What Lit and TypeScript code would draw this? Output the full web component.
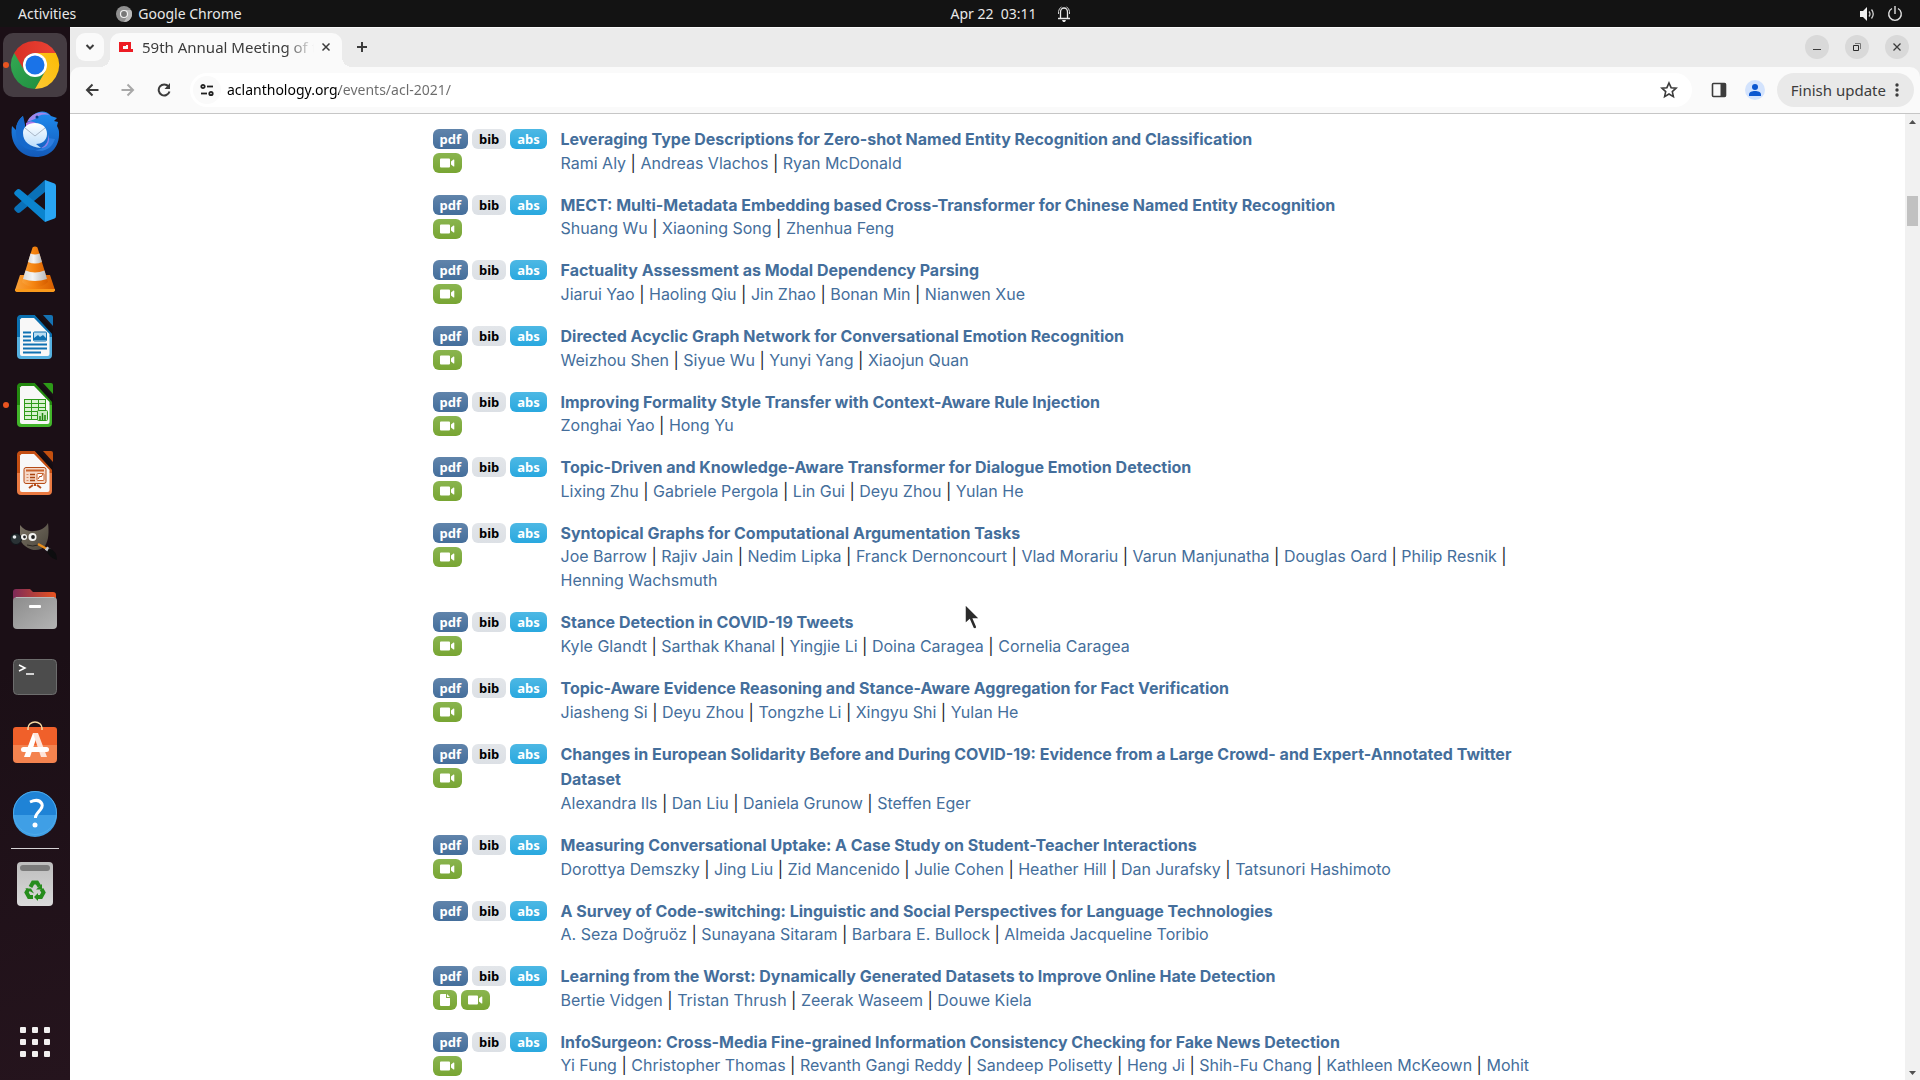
import { LitElement, html, svg, css, nothing } from "lit";
import { customElement, property } from "lit/decorators.js";

interface Paper {
  title: string;
  authors: string[];
  extras?: ("video" | "file")[];
}

const PAPERS: Paper[] = [
  { title: "Leveraging Type Descriptions for Zero-shot Named Entity Recognition and Classification", authors: ["Rami Aly", "Andreas Vlachos", "Ryan McDonald"], extras: ["video"] },
  { title: "MECT: Multi-Metadata Embedding based Cross-Transformer for Chinese Named Entity Recognition", authors: ["Shuang Wu", "Xiaoning Song", "Zhenhua Feng"], extras: ["video"] },
  { title: "Factuality Assessment as Modal Dependency Parsing", authors: ["Jiarui Yao", "Haoling Qiu", "Jin Zhao", "Bonan Min", "Nianwen Xue"], extras: ["video"] },
  { title: "Directed Acyclic Graph Network for Conversational Emotion Recognition", authors: ["Weizhou Shen", "Siyue Wu", "Yunyi Yang", "Xiaojun Quan"], extras: ["video"] },
  { title: "Improving Formality Style Transfer with Context-Aware Rule Injection", authors: ["Zonghai Yao", "Hong Yu"], extras: ["video"] },
  { title: "Topic-Driven and Knowledge-Aware Transformer for Dialogue Emotion Detection", authors: ["Lixing Zhu", "Gabriele Pergola", "Lin Gui", "Deyu Zhou", "Yulan He"], extras: ["video"] },
  { title: "Syntopical Graphs for Computational Argumentation Tasks", authors: ["Joe Barrow", "Rajiv Jain", "Nedim Lipka", "Franck Dernoncourt", "Vlad Morariu", "Varun Manjunatha", "Douglas Oard", "Philip Resnik", "Henning Wachsmuth"], extras: ["video"] },
  { title: "Stance Detection in COVID-19 Tweets", authors: ["Kyle Glandt", "Sarthak Khanal", "Yingjie Li", "Doina Caragea", "Cornelia Caragea"], extras: ["video"] },
  { title: "Topic-Aware Evidence Reasoning and Stance-Aware Aggregation for Fact Verification", authors: ["Jiasheng Si", "Deyu Zhou", "Tongzhe Li", "Xingyu Shi", "Yulan He"], extras: ["video"] },
  { title: "Changes in European Solidarity Before and During COVID-19: Evidence from a Large Crowd- and Expert-Annotated Twitter Dataset", authors: ["Alexandra Ils", "Dan Liu", "Daniela Grunow", "Steffen Eger"], extras: ["video"] },
  { title: "Measuring Conversational Uptake: A Case Study on Student-Teacher Interactions", authors: ["Dorottya Demszky", "Jing Liu", "Zid Mancenido", "Julie Cohen", "Heather Hill", "Dan Jurafsky", "Tatsunori Hashimoto"], extras: ["video"] },
  { title: "A Survey of Code-switching: Linguistic and Social Perspectives for Language Technologies", authors: ["A. Seza Doğruöz", "Sunayana Sitaram", "Barbara E. Bullock", "Almeida Jacqueline Toribio"] },
  { title: "Learning from the Worst: Dynamically Generated Datasets to Improve Online Hate Detection", authors: ["Bertie Vidgen", "Tristan Thrush", "Zeerak Waseem", "Douwe Kiela"], extras: ["file", "video"] },
  { title: "InfoSurgeon: Cross-Media Fine-grained Information Consistency Checking for Fake News Detection", authors: ["Yi Fung", "Christopher Thomas", "Revanth Gangi Reddy", "Sandeep Polisetty", "Heng Ji", "Shih-Fu Chang", "Kathleen McKeown", "Mohit"], extras: ["video"] },
];

/* LibreOffice document shape shared by Writer, Calc and Impress. */
const sheet = (id: string, top: string, bottom: string, edge: string, inner: unknown) => svg`
  <defs>
    <linearGradient id=${id} x1="0" y1="0" x2="0" y2="1">
      <stop offset=".5" stop-color=${top}/><stop offset=".5" stop-color=${bottom}/>
    </linearGradient>
  </defs>
  <path d="M9 2H24L41 20V42a4 4 0 0 1-4 4H10a4 4 0 0 1-4-4V6a4 4 0 0 1 3-4z" fill="url(#${id})"/>
  <path d="M10.500 5H23L38.500 21V41a2 2 0 0 1-2 2H11a2 2 0 0 1-2-2V6.500z" fill="#f8f8f8"/>
  <path d="M32 2h8a2 2 0 0 1 2 2v9z" fill=${edge}/>
  <path d="M24 2h4L42 16v6z" fill="#140d12"/>
  ${inner}`;

const DOCK: { name: string; running?: boolean; active?: boolean; art: unknown }[] = [
  {
    name: "Google Chrome", running: true, active: true,
    art: svg`
      <defs>
        <linearGradient id="cr" x1="0" y1="0" x2="1" y2="0"><stop stop-color="#d93025"/><stop offset="1" stop-color="#ea4335"/></linearGradient>
        <linearGradient id="cy" x1="0" y1="1" x2="1" y2="0"><stop stop-color="#fcc934"/><stop offset="1" stop-color="#fbbc04"/></linearGradient>
        <linearGradient id="cg" x1="0" y1="0" x2="1" y2="1"><stop stop-color="#34a853"/><stop offset="1" stop-color="#1e8e3e"/></linearGradient>
      </defs>
      <path d="M24 24L3.200 12A24 24 0 0 0 24 48L34.400 30z" fill="url(#cg)"/>
      <path d="M24 24L34.400 30 24 48A24 24 0 0 0 44.800 12H24z" fill="url(#cy)"/>
      <path d="M3.200 12A24 24 0 0 1 44.800 12H24A12 12 0 0 0 13.600 30z" fill="url(#cr)"/>
      <circle cx="24" cy="24" r="12" fill="#fff"/><circle cx="24" cy="24" r="9.500" fill="#1a73e8"/>`,
  },
  {
    name: "Thunderbird Mail",
    art: svg`
      <defs>
        <linearGradient id="tb" x1="0" y1="0" x2="0" y2="1"><stop stop-color="#1f8cf0"/><stop offset="1" stop-color="#1359b8"/></linearGradient>
        <linearGradient id="te" x1="0" y1="0" x2="0" y2="1"><stop stop-color="#fff"/><stop offset="1" stop-color="#b9dcfb"/></linearGradient>
      </defs>
      <path d="M1 17c-3 18 9 31 24 31 14 0 24-10 23-25 0-2-1-4-2-6l1-4-4-1 3-3-6-2C34-1 22 2 17 13c-2 3-3 7-3 11L12 7C7 11 5 16 5 21z" fill="url(#tb)"/>
      <path d="M5 21C5 15 8 10 12 7c1 5 3 9 2 15-1 10 4 17 13 19C12 43 4 32 5 21z" fill="#1669cc"/>
      <path d="M16 13C20 4 31 0 40 7c-6-3-13-1-16 3z" fill="#9f86ec"/>
      <path d="M15 14c4-2 7-2 10 0-5 1-8 3-10 8z" fill="#a978e6"/>
      <path d="M44 30c-3 9-11 14-20 11 8 0 12-5 13-12z" fill="#2c7de0"/>
      <path d="M30 39c6-3 8-8 7-14 3 8-1 14-7 14z" fill="#8d80e8"/>
      <path d="M24 14c8 0 12 5 12 11 0 7-6 10-11 10l5 4C19 38 12 33 12 24c0-6 5-10 12-10z" fill="url(#te)"/>
      <path d="M14 19l10 8 10-8" fill="none" stroke="#a9b6c6"/>
      <circle cx="26" cy="8" r="1.500" fill="#0b3f86"/>`,
  },
  {
    name: "Visual Studio Code",
    art: svg`
      <path d="M34 3v12L9 35.500Q7 36.500 5.500 35L3.500 33Q2.500 31.500 4 30z" fill="#0a71b8"/>
      <path d="M34 45V33L9 12.500Q7 11.500 5.500 13L3.500 15Q2.500 16.500 4 18z" fill="#0b84cf"/>
      <path d="M34 3l9.500 3.500Q45 7 45 9v30q0 2-1.500 2.500L34 45z" fill="#29a5f3"/>`,
  },
  {
    name: "VLC media player",
    art: svg`
      <defs>
        <linearGradient id="vo" x1="0" y1="0" x2="1" y2="0"><stop stop-color="#f9a13a"/><stop offset=".45" stop-color="#f58410"/><stop offset="1" stop-color="#d65d00"/></linearGradient>
        <linearGradient id="vw" x1="0" y1="0" x2="1" y2="0"><stop stop-color="#d8d8d8"/><stop offset=".4" stop-color="#f4f4f4"/><stop offset="1" stop-color="#b8b8b8"/></linearGradient>
      </defs>
      <path d="M9 30h30l5 15q0 1.500-1.500 1.500h-37Q4 46.500 4 45z" fill="url(#vo)"/>
      <path d="M4 44h40v1.500l-1.500 1.500h-37L4 45.500z" fill="#fa9a1c"/>
      <path d="M21.500 2.500q2.500-2 5 0L37 37q-5 5-13 5t-13-5z" fill="url(#vo)"/>
      <path d="M19.500 8.500q4.500 2 9 0L31 17q-7 3-14 0z" fill="url(#vw)"/>
      <path d="M14.500 25.500q9.500 4 19 0L36 34q-12 4-24 0z" fill="url(#vw)"/>`,
  },
  {
    name: "LibreOffice Writer",
    art: sheet("lw", "#0b70b0", "#55b0e0", "#1573b4", svg`
      <path d="M12 19.500h8M12 23.500h8M12 27.500h8M12 31.500h24M12 35.500h24M12 39.500h18" stroke="#0f71b2" stroke-width="2"/>
      <rect x="22.500" y="19" width="13" height="9" rx="1" fill="#b7dcf2" stroke="#0f71b2"/>
      <path d="M23 27v-2l4-3 2 2 3-2 3 3v2z" fill="#0f71b2"/>`),
  },
  {
    name: "LibreOffice Calc", running: true,
    art: sheet("lc", "#23890f", "#42b52a", "#2d9a18", svg`
      <rect x="13.500" y="18.500" width="21" height="20" fill="#d8f2d0" stroke="#2d9a18"/>
      <path d="M14 22.500h21M14 26.500h21M14 30.500h21M14 34.500h21M20.500 18v20M27.500 18v20" stroke="#2d9a18"/>
      <rect x="26.500" y="29.500" width="10" height="10" rx="1" fill="#c9ecbf" stroke="#2d9a18"/>
      <path d="M29 39v-4M31.500 39v-7M34 39v-5" stroke="#1f850d" stroke-width="1.500"/>`),
  },
  {
    name: "LibreOffice Impress",
    art: sheet("li", "#c44e12", "#ea7a42", "#c4500f", svg`
      <rect x="13" y="18.500" width="22" height="16" rx="2" fill="#f6d9c8" stroke="#b54c17"/>
      <path d="M15 21.500h18" stroke="#c9622c" stroke-width="2"/>
      <path d="M19 25.500h5M19 28.500h5M19 31.500h5" stroke="#a8440f" stroke-width="1.500"/>
      <path d="M15.500 25.500h2M15.500 28.500h2M15.500 31.500h2" stroke="#d98a62"/>
      <rect x="26" y="24.500" width="7" height="7" rx="1" fill="#fff" stroke="#c9622c"/>
      <path d="M27 30l2-3 1 1 2-3" fill="none" stroke="#b54c17"/>
      <path d="M22 36l-4 3M26 36l4 3M24 35v2" stroke="#b54c17" stroke-width="2"/>`),
  },
  {
    name: "GNU Image Manipulation Program",
    art: svg`
      <defs><linearGradient id="gi" x1="0" y1="0" x2="1" y2="1"><stop stop-color="#7a7264"/><stop offset="1" stop-color="#4a453c"/></linearGradient></defs>
      <path d="M9 8c4 5 9 7 14 6 7 0 12-4 14-8 1 8 1 17-3 23-4 5-12 5-17 2-4-2-6-5-8-8z" fill="url(#gi)"/>
      <circle cx="5" cy="22" r="5.500" fill="#2a3235" stroke="#10151a"/>
      <circle cx="3.500" cy="20" r="1.800" fill="#e8ecee"/>
      <circle cx="13" cy="20" r="3" fill="#f4f4f2"/><circle cx="13.500" cy="20" r="1.400" fill="#222"/>
      <circle cx="21.500" cy="20" r="4" fill="#f4f4f2"/><circle cx="22" cy="20" r="1.900" fill="#222"/>
      <path d="M16 28q6 2 11 0" fill="none" stroke="#2a2620"/>
      <path d="M27 27l9 5" stroke="#e88d1b" stroke-width="2.500"/>
      <path d="M35 31l4 3" stroke="#c9ccd0" stroke-width="4"/>
      <path d="M38 31q8 3 8 12-8-3-10-8z" fill="#0d0d0f"/>`,
  },
  {
    name: "Files",
    art: svg`
      <defs>
        <linearGradient id="fo" x1="0" y1="0" x2="1" y2="0"><stop stop-color="#7d2a58"/><stop offset="1" stop-color="#e95420"/></linearGradient>
        <linearGradient id="fg" x1="0" y1="0" x2="1" y2="1"><stop stop-color="#8c8c8c"/><stop offset="1" stop-color="#b4b4b4"/></linearGradient>
      </defs>
      <path d="M2 7a3 3 0 0 1 3-3h14l3 3h20a3 3 0 0 1 3 3v10H2z" fill="url(#fo)"/>
      <rect x="2" y="12" width="44" height="32" rx="4" fill="url(#fg)"/>
      <path d="M5 12.500h38" stroke="#b9b9b9"/>
      <rect x="18" y="20" width="12" height="3" rx="1" fill="#fff"/>`,
  },
  {
    name: "Terminal",
    art: svg`
      <rect x="2.500" y="6.500" width="43" height="35" rx="4" fill="#4c4c4c" stroke="#6d6d6d"/>
      <path d="M8 12l6 3-6 3" fill="none" stroke="#fff" stroke-width="1.500"/>
      <path d="M15 21h8" stroke="#fff" stroke-width="1.500"/>`,
  },
  {
    name: "Ubuntu Software",
    art: svg`
      <path d="M2 9a3 3 0 0 1 3-3h38a3 3 0 0 1 3 3v15H2z" fill="#f0602a"/>
      <path d="M2 24h44v14a4 4 0 0 1-4 4H6a4 4 0 0 1-4-4z" fill="#f4834f"/>
      <path d="M17 9V7a7 6 0 0 1 14 0v2" fill="none" stroke="#f6d9a3" stroke-width="1.500"/>
      <path d="M22 12h5l-8 24h-6z" fill="#fff"/>
      <path d="M22 12h5l9 24h-6z" fill="#fde4da"/>
      <rect x="10" y="26" width="28" height="5" rx="2.500" fill="#fff"/>`,
  },
  {
    name: "Help",
    art: svg`
      <circle cx="24" cy="24" r="22" fill="#1f83d6"/>
      <path d="M2 26a22 22 0 0 0 44 0z" fill="#3f9fe6"/>
      <circle cx="24" cy="24" r="21.500" fill="none" stroke="#4fabea"/>
      <path d="M19 13q9-4 12 2c2 5-6 8-6.500 13v1" fill="none" stroke="#fff" stroke-width="3"/>
      <circle cx="24" cy="36" r="2.500" fill="#fff"/>`,
  },
];

const TRASH = svg`
  <defs><linearGradient id="tr" x1="0" y1="0" x2="0" y2="1"><stop stop-color="#bdbdbd"/><stop offset="1" stop-color="#dadada"/></linearGradient></defs>
  <rect x="6" y="2" width="36" height="44" rx="4" fill="url(#tr)"/>
  <rect x="9" y="5" width="30" height="6" rx="3" fill="#7b7b7b"/>
  <g fill="none" stroke="#268c1c" stroke-width="4">
    <path d="M19.500 27l2.500-4.500h4l2.500 4"/>
    <path d="M30.500 29l2 3.500-2.500 4.500h-4"/>
    <path d="M22 37h-4l-2.500-4.500 2-3.500"/>
  </g>
  <path d="M31 24v5.500h-6zM27 33v8l-4-4zM14 28.500h6l3 5z" fill="#268c1c"/>`;

const icon = (size: number, art: unknown) => html`<svg width=${size} height=${size} viewBox="0 0 ${size} ${size}" aria-hidden="true">${art}</svg>`;

@customElement("top-panel")
class TopPanel extends LitElement {
  static styles = css`
    :host {
      display: grid;
      grid-template-columns: 1fr auto 1fr;
      align-items: center;
      height: 27px;
      padding: 0 17px 0 18px;
      background: #131313;
      color: #e8e8e8;
      font: 14px/20px "Noto Sans", "Open Sans", sans-serif;
    }
    button {
      display: flex;
      align-items: center;
      padding: 0;
      border: 0;
      background: none;
      color: inherit;
      font: inherit;
    }
    svg { display: block; }
    .left { display: flex; gap: 40px; }
    .app { gap: 6px; }
    .clock { gap: 20px; margin-left: 100px; white-space: pre; }
    .status { justify-self: end; gap: 12px; }
  `;
  render() {
    return html`
      <div class="left">
        <button>Activities</button>
        <button class="app">
          ${icon(16, svg`<circle cx="8" cy="8" r="8" fill="#8f8f8f"/><path d="M8 4h7A8 8 0 0 1 8 16l3.500-6z" fill="#b9b9b9"/><circle cx="8" cy="8" r="3.500" fill="#777" stroke="#f2f2f2" stroke-width="1.200"/>`)}
          Google Chrome
        </button>
      </div>
      <button class="clock">Apr 22  03:11<svg width="14" height="16" viewBox="0 0 14 16" aria-hidden="true"><path d="M1 12.500h12M3.500 12V6a3.500 4 0 0 1 7 0v6" fill="none" stroke="#e8e8e8" stroke-width="1.300"/><path d="M1.500 8V5.500Q2 2 4.500 1M12.500 8V5.500Q12 2 9.500 1" fill="none" stroke="#cfcfcf"/><path d="M5 14h4l-1 2H6z" fill="#e8e8e8"/></svg></button>
      <button class="status" aria-label="System menu">
        ${icon(16, svg`<path d="M1 5h3l4-4v14l-4-4H1z" fill="#f0f0f0"/><path d="M10 5.500q2 2.500 0 5M12.500 3.500q3.500 4.500 0 9" fill="none" stroke="#d0d0d0" stroke-width="1.300"/>`)}
        ${icon(16, svg`<path d="M5 2.500a6.300 6.300 0 1 0 6 0M8 0v8" fill="none" stroke="#e0e0e0" stroke-width="1.400"/>`)}
      </button>
    `;
  }
}

@customElement("app-dock")
class AppDock extends LitElement {
  static styles = css`
    :host {
      display: flex;
      flex-direction: column;
      align-items: center;
      flex: none;
      width: 70px;
      box-sizing: border-box;
      padding: 6px 0;
      background: linear-gradient(165deg, #1b0f16 60%, #25141d);
    }
    .apps { display: flex; flex-direction: column; gap: 4px; }
    .tile {
      position: relative;
      display: grid;
      place-items: center;
      width: 64px;
      height: 64px;
      padding: 0;
      border: 0;
      border-radius: 10px;
      background: none;
    }
    .tile.active { background: #453c42; }
    .dot {
      position: absolute;
      left: 0;
      top: 29px;
      width: 6px;
      height: 6px;
      border-radius: 50%;
      background: #e95420;
    }
    .rule { width: 48px; height: 1px; margin: 3px 0; border: 0; background: #d6d3d5; }
    .grid { margin-top: auto; }
    svg { display: block; overflow: visible; }
  `;
  render() {
    return html`
      <div class="apps">
        ${DOCK.map((a) => html`
          <button class="tile ${a.active ? "active" : ""}" aria-label=${a.name}>
            ${a.running ? html`<span class="dot"></span>` : nothing}
            ${icon(48, a.art)}
          </button>`)}
      </div>
      <hr class="rule">
      <button class="tile" aria-label="Trash">${icon(48, TRASH)}</button>
      <button class="tile grid" aria-label="Show Applications">
        ${icon(30, [0, 12, 24].map((y) => [0, 12, 24].map((x) => svg`<rect x=${x} y=${y} width="6" height="6" rx="1" fill="#f2f0f0"/>`)))}
      </button>
    `;
  }
}

@customElement("browser-chrome")
class BrowserChrome extends LitElement {
  static styles = css`
    :host {
      display: block;
      background: #ebebeb;
      border-bottom: 1px solid #c6c6c6;
      color: #3c3c3c;
      font: 15px/20px "Noto Sans", "Open Sans", sans-serif;
    }
    button {
      display: grid;
      place-items: center;
      flex: none;
      padding: 0;
      border: 0;
      background: none;
      color: inherit;
      font: inherit;
    }
    svg { display: block; }
    .strip {
      display: flex;
      align-items: flex-start;
      height: 40px;
      padding: 5px 11px 0 6px;
      box-sizing: border-box;
      border-top: 1px solid #fafafa;
    }
    .search { width: 28px; height: 28px; border-radius: 9px; background: #fafafa; }
    .tab {
      position: relative;
      display: flex;
      align-items: center;
      width: 232px;
      height: 34px;
      margin-left: 6px;
      padding: 0 8px 6px 9px;
      box-sizing: border-box;
      border-radius: 10px 10px 0 0;
      background: #fafafa;
    }
    .tab::before, .tab::after {
      content: "";
      position: absolute;
      bottom: 0;
      width: 10px;
      height: 10px;
    }
    .tab::before { left: -10px; background: radial-gradient(circle at 0 0, transparent 10px, #fafafa 10px); }
    .tab::after { right: -10px; background: radial-gradient(circle at 100% 0, transparent 10px, #fafafa 10px); }
    .title {
      display: block;
      flex: 1;
      min-width: 0;
      height: 20px;
      margin-left: 9px;
      overflow: hidden;
      white-space: nowrap;
      text-align: left;
      mask-image: linear-gradient(90deg, #000 calc(100% - 28px), transparent);
    }
    .close { width: 16px; height: 16px; margin-left: 4px; }
    .new { width: 28px; height: 28px; margin-left: 6px; }
    .windows { display: flex; gap: 16px; margin-left: auto; padding-top: 2px; }
    .round { width: 24px; height: 24px; border-radius: 50%; background: #d9d9d9; }
    .toolbar {
      display: flex;
      align-items: center;
      gap: 8px;
      height: 46px;
      padding: 0 6px 0 8px;
      box-sizing: border-box;
      border-radius: 10px 10px 0 0;
      background: #fafafa;
    }
    .nav { width: 28px; height: 28px; }
    .omnibox {
      display: flex;
      align-items: center;
      flex: 1;
      height: 34px;
      margin-left: 4px;
      padding: 0 13px 0 3px;
      border-radius: 17px;
      background: #fff;
    }
    .site { width: 28px; height: 28px; border-radius: 50%; background: #fafafa; }
    .url {
      flex: 1;
      height: 24px;
      margin-left: 6px;
      padding: 0 0 2px;
      border: 0;
      outline: 0;
      background: linear-gradient(90deg, #000 112px, #6b6b6b 112px);
      background-clip: text;
      -webkit-background-clip: text;
      color: transparent;
      font: inherit;
      font-size: 14px;
    }
    .panel { width: 28px; height: 28px; margin-left: 5px; }
    .avatar { width: 20px; height: 20px; border-radius: 50%; margin-left: 4px; background: #d3e3fd; }
    .update {
      display: flex;
      align-items: center;
      gap: 9px;
      height: 34px;
      margin-left: 4px;
      padding: 0 15px 1px 14px;
      border-radius: 17px;
      background: #e9e9e9;
    }
  `;
  render() {
    const line = (d: string, color = "#3c3c3c", w = 2) => svg`<path d=${d} fill="none" stroke=${color} stroke-width=${w}/>`;
    return html`
      <div class="strip">
        <button class="search" aria-label="Search tabs">${icon(10, line("M1.500 3l3.500 3.500L8.500 3"))}</button>
        <div class="tab">
          <svg width="14" height="10" viewBox="0 0 14 10" aria-hidden="true"><path d="M0 0h12v7h2v3H0zM4 4v3h5V3H7v1z" fill="#ed1c24" fill-rule="evenodd"/></svg>
          <button class="title">59th Annual Meeting of t</button>
          <button class="close" aria-label="Close tab">${icon(10, line("M1.500 1.500l7 7M8.500 1.500l-7 7", "#3c3c3c", 1.5))}</button>
        </div>
        <button class="new" aria-label="New tab">${icon(12, line("M6 1v10M1 6h10"))}</button>
        <div class="windows">
          <button class="round" aria-label="Minimize">${icon(10, line("M1 7.500h8", "#3c3c3c", 1))}</button>
          <button class="round" aria-label="Restore">${icon(10, svg`${line("M1.500 3.500h5v5h-5z", "#2c2c2c", 1)}${line("M3 1.500h5.500V7", "#777", 1)}`)}</button>
          <button class="round" aria-label="Close">${icon(10, line("M1.500 1.500l7 7M8.500 1.500l-7 7", "#3c3c3c", 1.3))}</button>
        </div>
      </div>
      <div class="toolbar">
        <button class="nav" aria-label="Back">${icon(14, line("M13.500 7H2M7.500 1.500L2 7l5.500 5.500"))}</button>
        <button class="nav" aria-label="Forward">${icon(14, line("M.500 7H12M6.500 1.500L12 7l-5.500 5.500", "#a8a8a8"))}</button>
        <button class="nav" aria-label="Reload">${icon(14, svg`${line("M11.500 3.500A5.500 5.500 0 1 0 12.500 8.500")}<path d="M13 0v6H7.500z" fill="#3c3c3c"/>`)}</button>
        <div class="omnibox">
          <button class="site" aria-label="View site information">${icon(14, svg`<g fill="none" stroke="#1f1f1f" stroke-width="1.800"><circle cx="3" cy="3.500" r="1.700"/><path d="M7 3.500h6"/><circle cx="11" cy="10.500" r="1.700"/><path d="M1 10.500h6"/></g>`)}</button>
          <input class="url" aria-label="Address and search bar" .value=${"aclanthology.org/events/acl-2021/"}>
          <button aria-label="Bookmark this tab">${icon(20, svg`<path d="M10 3l2.100 4.700 5 .500-3.800 3.400 1.100 5L10 14l-4.400 2.600 1.100-5L2.900 8.200l5-.500z" fill="none" stroke="#3c3c3c" stroke-width="1.600"/>`)}</button>
        </div>
        <button class="panel" aria-label="Side panel">${icon(16, svg`<rect x="1.500" y="1.500" width="13" height="13" rx="1" fill="none" stroke="#3c3c3c" stroke-width="1.600"/><path d="M9.500 1.500h5v13h-5z" fill="#3c3c3c"/>`)}</button>
        <button class="avatar" aria-label="Profile">${icon(14, svg`<circle cx="7" cy="4" r="3" fill="#0b57d0"/><path d="M1 13v-1.500C1 9 4 8 7 8s6 1 6 3.500V13z" fill="#0b57d0"/>`)}</button>
        <button class="update">Finish update<svg width="4" height="14" viewBox="0 0 4 14" aria-hidden="true"><g fill="#3c3c3c"><circle cx="2" cy="2" r="1.700"/><circle cx="2" cy="7" r="1.700"/><circle cx="2" cy="12" r="1.700"/></g></svg></button>
      </div>
    `;
  }
}

@customElement("paper-entry")
class PaperEntry extends LitElement {
  @property({ attribute: false }) paper!: Paper;
  static styles = css`
    :host { display: flex; align-items: flex-start; margin-bottom: 16px; }
    .links {
      flex: none;
      width: 120px;
      margin: 2px 8px -4px 0;
    }
    .row { display: flex; gap: 4px; height: 24px; align-items: center; }
    .badge {
      display: flex;
      align-items: center;
      height: 20px;
      padding: 0 7px;
      border-radius: 6px;
      color: #fff;
      font: 700 13px/20px "Noto Sans", sans-serif;
      text-decoration: none;
    }
    .pdf { background: linear-gradient(#6084ab, #446e9b); }
    .bib { background: linear-gradient(#e3e6ea, #dce0e5); color: #000; }
    .abs { background: linear-gradient(#4db8e4, #29a8df); }
    .extra { background: linear-gradient(#8ab54f, #78a533); }
    .text { display: block; min-width: 0; }
    .title { vertical-align: middle; }
    a { color: #446e9b; text-decoration: none; }
    svg { display: block; }
  `;
  render() {
    const { title, authors, extras = [] } = this.paper;
    return html`
      <div class="links">
        <div class="row">
          <a class="badge pdf" href="#pdf">pdf</a>
          <a class="badge bib" href="#bib">bib</a>
          <a class="badge abs" href="#abs">abs</a>
        </div>
        ${extras.length ? html`<div class="row">
          ${extras.map((e) => e === "video"
            ? html`<a class="badge extra" href="#video" aria-label="Video"><svg width="15" height="12" viewBox="0 0 15 12" aria-hidden="true"><path d="M0 2.500Q0 1.500 1 1.500h8q1 0 1 1v7q0 1-1 1H1q-1 0-1-1zM11 4.500l2.500-2q.800-.300.800.500v6q0 .800-.800.500l-2.500-2z" fill="#fff"/></svg></a>`
            : html`<a class="badge extra" href="#attachment" aria-label="Attachment"><svg width="10" height="12" viewBox="0 0 10 12" aria-hidden="true"><path d="M1 0h5v4h4v7q0 1-1 1H1q-1 0-1-1V1q0-1 1-1zM7 0l3 3H7z" fill="#fff"/></svg></a>`)}
        </div>` : nothing}
      </div>
      <span class="text"><strong><a class="title" href="#paper">${title}</a></strong><br>${authors.map((a, i) => html`${i ? " | " : ""}<a href="#author">${a}</a>`)}</span>
    `;
  }
}

@customElement("app-root")
class AppRoot extends LitElement {
  static styles = css`
    :host { display: flex; flex-direction: column; height: 100vh; overflow: hidden; }
    .desktop { display: flex; flex: 1; min-height: 0; }
    .window { display: flex; flex-direction: column; flex: 1; min-width: 0; background: #fff; }
    .view { display: flex; flex: 1; min-height: 0; }
    .page {
      flex: 1;
      min-width: 0;
      overflow: hidden;
      color: #212529;
      font: 16px/24px Inter, "Noto Sans", sans-serif;
    }
    .container { max-width: 1140px; margin: 0 auto; padding: 11px 15px 0; box-sizing: border-box; }
    .scroll {
      display: flex;
      flex-direction: column;
      align-items: center;
      flex: none;
      width: 15px;
      background: #f1f1f1;
    }
    .scroll svg { display: block; flex: none; }
    .thumb { width: 11px; height: 30px; margin-top: 67px; background: #c1c1c1; }
    .down { margin-top: auto; }
    .pointer { position: absolute; left: 963px; top: 602px; }
  `;
  render() {
    return html`
      <top-panel></top-panel>
      <div class="desktop">
        <app-dock></app-dock>
        <div class="window">
          <browser-chrome></browser-chrome>
          <div class="view">
            <main class="page">
              <div class="container">${PAPERS.map((p) => html`<paper-entry .paper=${p}></paper-entry>`)}</div>
            </main>
            <div class="scroll">
              <svg width="15" height="15" viewBox="0 0 15 15" aria-hidden="true"><path d="M4 10l3.500-4 3.500 4z" fill="#505050"/></svg>
              <div class="thumb"></div>
              <svg class="down" width="15" height="15" viewBox="0 0 15 15" aria-hidden="true"><path d="M4 6l3.500 4L11 6z" fill="#505050"/></svg>
            </div>
          </div>
        </div>
      </div>
      <svg class="pointer" width="20" height="30" viewBox="0 0 20 30" aria-hidden="true"><path d="M2 2v20l4.500-4 3.500 8q1.500 1.500 3 .500 1.500-1 .500-2.500L10.500 17H17z" fill="#2b2b2b" stroke="#fff" stroke-width="1.500"/></svg>
    `;
  }
}
